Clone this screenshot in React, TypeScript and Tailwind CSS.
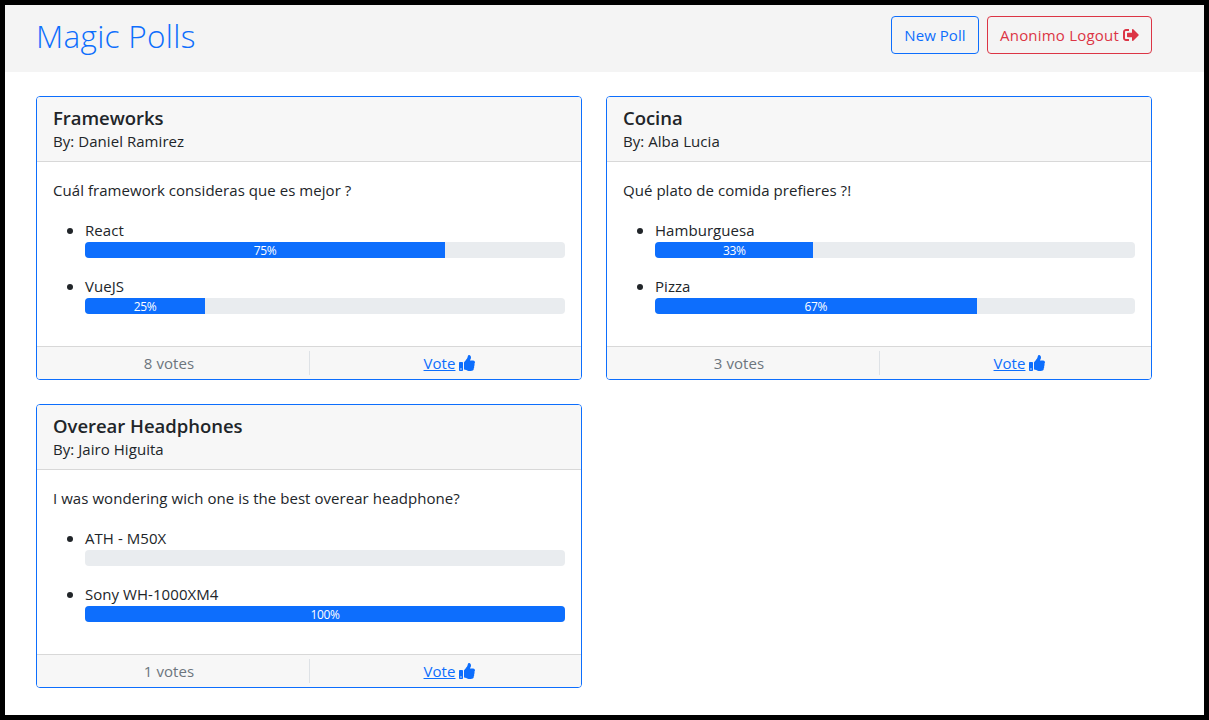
import { FaSignOutAlt, FaThumbsUp } from "react-icons/fa";

type Option = { name: string; percent: number };
type Poll = {
  title: string;
  author: string;
  question: string;
  options: Option[];
  votes: number;
};

const polls: Poll[] = [
  {
    title: "Frameworks",
    author: "Daniel Ramirez",
    question: "Cuál framework consideras que es mejor ?",
    options: [
      { name: "React", percent: 75 },
      { name: "VueJS", percent: 25 },
    ],
    votes: 8,
  },
  {
    title: "Cocina",
    author: "Alba Lucia",
    question: "Qué plato de comida prefieres ?!",
    options: [
      { name: "Hamburguesa", percent: 33 },
      { name: "Pizza", percent: 67 },
    ],
    votes: 3,
  },
  {
    title: "Overear Headphones",
    author: "Jairo Higuita",
    question: "I was wondering wich one is the best overear headphone?",
    options: [
      { name: "ATH - M50X", percent: 0 },
      { name: "Sony WH-1000XM4", percent: 100 },
    ],
    votes: 1,
  },
];

function Progress({ percent }: { percent: number }) {
  return (
    <div className="flex h-4 overflow-hidden rounded bg-[#e9ecef]">
      <div
        className="flex items-center justify-center overflow-hidden bg-[#0d6efd] pt-px text-[12px] leading-none font-medium tracking-[-0.35px] text-white"
        style={{ width: `${percent}%` }}
      >
        {percent > 0 && `${percent}%`}
      </div>
    </div>
  );
}

function PollCard({ poll }: { poll: Poll }) {
  return (
    <article className="overflow-hidden rounded border border-[#0d6efd] bg-white">
      <header className="border-b border-[#d8d8d8] bg-[#f7f7f7] px-4 pt-[10px] pb-2">
        <h5 className="text-[18.5px] leading-[22px] font-semibold tracking-[-0.03px]">{poll.title}</h5>
        <p>By: {poll.author}</p>
      </header>
      <div className="p-4">
        <p className="mb-4">{poll.question}</p>
        <ul className="list-disc pl-8">
          {poll.options.map((option) => (
            <li key={option.name} className="mb-4 marker:text-[16px]">
              {option.name}
              <Progress percent={option.percent} />
            </li>
          ))}
        </ul>
      </div>
      <footer className="flex border-t border-[#d8d8d8] bg-[#f7f7f7] py-1">
        <div className="w-[273px] border-r border-[#dee2e6] pr-2 text-center text-[#6c757d]">
          {poll.votes} votes
        </div>
        <div className="flex flex-1 items-center justify-center gap-1 pl-2 text-[#0d6efd]">
          <a href="#" className="underline">Vote</a>
          <FaThumbsUp size={16} />
        </div>
      </footer>
    </article>
  );
}

export default function App() {
  return (
    <div className="h-[720px] overflow-hidden border-[5px] border-black bg-white font-['Open_Sans','Noto_Sans',sans-serif] text-[15px] leading-6 tracking-[0.05px] text-[#212529]">
      <nav className="flex h-[67px] items-start justify-between bg-[#f4f4f4] pt-[11px] pr-[52px] pl-[31px]">
        <h1 className="text-[31.5px] leading-[40px] font-light tracking-[0.3px] text-[#0d6efd]">Magic Polls</h1>
        <div className="flex gap-2">
          <button className="h-[38px] w-[88px] rounded border border-[#0d6efd] text-[#0d6efd]">
            New Poll
          </button>
          <button className="flex h-[38px] w-[165px] items-center justify-center gap-1 rounded border border-[#dc3545] text-[#dc3545]">
            <span className="tracking-[0.2px]">Anonimo Logout</span>
            <FaSignOutAlt size={16} />
          </button>
        </div>
      </nav>
      <main className="grid grid-cols-[546px_546px] gap-6 pt-6 pl-[31px]">
        {polls.map((poll) => (
          <PollCard key={poll.title} poll={poll} />
        ))}
      </main>
    </div>
  );
}
